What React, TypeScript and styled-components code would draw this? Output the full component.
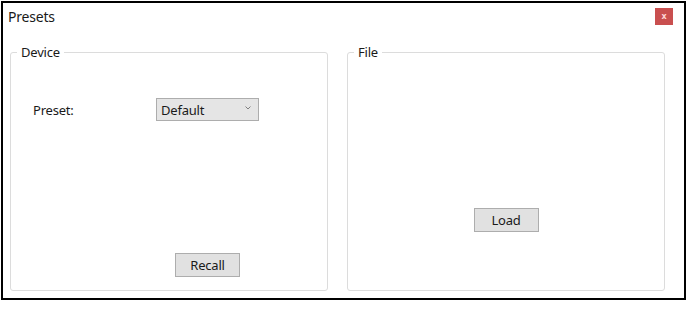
import React from "react";
import styled, { createGlobalStyle } from "styled-components";

const Global = createGlobalStyle`
  html, body { margin: 0; padding: 0; background: #ffffff; }
  body { padding: 1px; font-family: "Noto Sans", "Open Sans", sans-serif; color: #1a1a1a; }
  * { box-sizing: border-box; }
`;

const Window = styled.div`
  width: 685px;
  height: 299px;
  border: 2px solid #000;
  background: #ffffff;
  display: flex;
  flex-direction: column;
`;

const TitleBar = styled.div`
  height: 28px;
  display: flex;
  align-items: flex-start;
  justify-content: space-between;
  padding: 4px 11px 0 5px;
`;

const Title = styled.span`
  font-size: 14px;
  line-height: 20px;
  letter-spacing: -0.2px;
`;

const CloseButton = styled.button`
  width: 18px;
  height: 17px;
  margin-top: 1px;
  border: none;
  padding: 0;
  background: #c94f4f;
  color: #ffd6d6;
  font-family: "DejaVu Sans", sans-serif;
  font-size: 8px;
  font-weight: bold;
  line-height: 17px;
  text-align: center;
`;

const Body = styled.div`
  flex: 1;
  display: flex;
  gap: 19px;
  padding: 13px 19px 7px 7px;
`;

const Group = styled.fieldset`
  flex: 1;
  margin: 0;
  min-width: 0;
  border: 1px solid #dcdcdc;
  border-radius: 3px;
  padding: 0;
  display: flex;
  flex-direction: column;
`;

const Legend = styled.legend`
  margin-left: 6px;
  padding: 0 4px;
  font-size: 13px;
  line-height: 16px;
  letter-spacing: -0.2px;
`;

const Row = styled.div`
  display: flex;
  align-items: center;
  margin-top: 38px;
  padding-left: 22px;
`;

const Label = styled.span`
  width: 123px;
  font-size: 13px;
  letter-spacing: -0.2px;
`;

const Select = styled.div`
  width: 103px;
  height: 23px;
  border: 1px solid #adadad;
  background: #e5e5e5;
  display: flex;
  align-items: center;
  justify-content: space-between;
  padding: 0 7px 0 4px;
  font-size: 13px;
  letter-spacing: -0.2px;
`;

const Chevron = styled.svg`
  width: 6px;
  height: 4px;
  margin-top: -3px;
`;

const Button = styled.button<{ $top?: number; $left?: number }>`
  width: 65px;
  height: 24px;
  border: 1px solid #adadad;
  background: #e1e1e1;
  font-family: "Noto Sans", "Open Sans", sans-serif;
  font-size: 13px;
  letter-spacing: -0.2px;
  color: #1a1a1a;
  padding: 0;
  margin-top: ${(p) => p.$top ?? 0}px;
  margin-left: ${(p) => (p.$left === undefined ? "auto" : `${p.$left}px`)};
  margin-right: ${(p) => (p.$left === undefined ? "auto" : "0")};
`;

export default function App() {
  return (
    <>
      <Global />
      <Window>
        <TitleBar>
          <Title>Presets</Title>
          <CloseButton>x</CloseButton>
        </TitleBar>
        <Body>
          <Group>
            <Legend>Device</Legend>
            <Row>
              <Label>Preset:</Label>
              <Select>
                <span>Default</span>
                <Chevron viewBox="0 0 6 4">
                  <path d="M0.5 0.5 L3 3 L5.5 0.5" fill="none" stroke="#808080" strokeWidth="1" />
                </Chevron>
              </Select>
            </Row>
            <Button $top={132} $left={164}>Recall</Button>
          </Group>
          <Group>
            <Legend>File</Legend>
            <Button $top={148}>Load</Button>
          </Group>
        </Body>
      </Window>
    </>
  );
}
